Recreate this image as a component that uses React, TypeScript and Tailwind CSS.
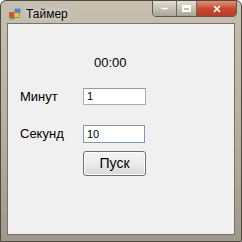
import { X, Minus } from 'lucide-react';

function AppIcon() {
  return (
    <svg width="13" height="12" viewBox="0 0 13 12">
      <rect x="0.5" y="4.5" width="5" height="5" fill="#e04a3a" />
      <rect x="5.5" y="4.5" width="5" height="5" fill="#f2c230" />
      <rect x="5.5" y="0.5" width="6" height="4" fill="#4a8ad8" />
      <rect x="0.5" y="9" width="5" height="2.5" fill="#58b848" />
      <rect x="0.5" y="4.5" width="10" height="5" fill="none" stroke="#7a6a50" strokeWidth="0.6" />
    </svg>
  );
}

export default function App() {
  return (
    <div
      className="w-[242px] h-[242px] flex flex-col border border-[#4e4a42] rounded-t-[6px] bg-linear-to-b from-[#c6bfb0] via-[#b8b0a0] to-[#a0988a] overflow-hidden"
      style={{ fontFamily: '"Liberation Sans", "Noto Sans", sans-serif' }}
    >
      {/* Title bar */}
      <div className="h-[22px] flex items-start shrink-0">
        <div className="flex items-center gap-[4px] pl-[8px] pt-[6px]">
          <AppIcon />
          <span className="text-[12px] leading-[14px] text-black [text-shadow:0_0_6px_#fff]">Таймер</span>
        </div>
        <div className="ml-auto mr-[4px] flex h-[17px] -mt-px border border-[#5e5a50] rounded-b-[4px] overflow-hidden">
          <div className="w-[24px] flex items-center justify-center bg-linear-to-b from-[#e2ded6] to-[#aaa496] border-r border-[#6e6a60]">
            <Minus className="w-[9px] h-[9px] text-white" strokeWidth={4} />
          </div>
          <div className="w-[20px] flex items-center justify-center bg-linear-to-b from-[#e2ded6] to-[#aaa496] border-r border-[#6e6a60]">
            <div className="w-[9px] h-[7px] border-2 border-t-[3px] border-white" />
          </div>
          <div className="w-[39px] flex items-center justify-center bg-linear-to-b from-[#e0907a] via-[#c84a30] to-[#bc3a22]">
            <X className="w-[10px] h-[10px] text-white" strokeWidth={4} />
          </div>
        </div>
      </div>

      {/* Client area */}
      <div className="flex-1 mx-[6px] mb-[6px] border border-[#77716a] bg-[#f0f0f0] flex flex-col text-[13px] text-black">
        <div className="mt-[31px] h-[16px] leading-[16px] text-[13px] pl-[86px]">00:00</div>

        <div className="mt-[17px] flex items-center h-[17px]">
          <span className="w-[75px] pl-[12px]">Минут</span>
          <div className="w-[63px] h-[17px] bg-white border border-[#acacac] border-t-[#9a9a9a] text-[11px] leading-[15px] pl-[3px]">1</div>
        </div>

        <div className="mt-[20px] flex items-center h-[18px]">
          <span className="w-[75px] pl-[12px]">Секунд</span>
          <div className="w-[62px] h-[18px] bg-white border border-[#7a9ab8] text-[11px] leading-[16px] pl-[3px]">10</div>
        </div>

        <div className="mt-[8px] pl-[75px]">
          <div className="w-[63px] h-[25px] rounded-[3px] border border-[#707070] bg-linear-to-b from-[#f4f4f4] via-[#ebebeb] to-[#d8d8d8] flex items-center justify-center text-[14px] shadow-[inset_0_0_0_1px_#fcfcfc]">
            Пуск
          </div>
        </div>
      </div>
    </div>
  );
}
